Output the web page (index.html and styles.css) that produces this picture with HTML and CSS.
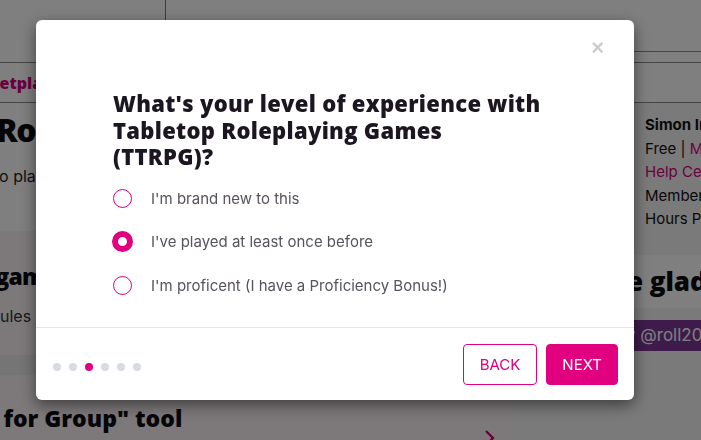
FILE: index.html
```html
<!DOCTYPE html>
<html lang="en">
<head>
<meta charset="utf-8">
<title>Roll20 – Onboarding</title>
<link rel="stylesheet" href="styles.css">
</head>
<body>
<div class="page">
  <header class="topbar">
    <div class="brand"></div>
    <div class="topbar-rest"></div>
  </header>
  <nav class="nav">
    <a class="nav-link">Marketplace</a>
  </nav>
  <div class="main">
    <section class="content">
      <div class="hero">
        <h1 class="hero-title">Roll20</h1>
        <p class="hero-text">to play</p>
      </div>
      <div class="card card-games">
        <h2 class="card-title games-title">Board games</h2>
        <p class="card-text">rules can vary</p>
      </div>
      <div class="card card-lfg">
        <h2 class="card-title lfg-title">Use the "Looking for Group" tool</h2>
        <svg class="chevron" width="12" height="16" viewBox="0 0 12 16"><path d="M2 1 L9 8 L2 15" fill="none" stroke="#c4006f" stroke-width="2.2"/></svg>
      </div>
    </section>
    <aside class="sidebar">
      <div class="profile">
        <div class="avatar"></div>
        <div class="profile-info">
          <div class="profile-name">Simon Ingram</div>
          <div>Free | <span class="pink">My Account</span></div>
          <div class="pink">Help Center</div>
          <div>Member Since</div>
          <div>Hours Played</div>
        </div>
      </div>
      <div class="glad">We're glad you're here</div>
      <div class="follow">Follow @roll20</div>
    </aside>
  </div>
</div>

<div class="backdrop">
  <div class="modal">
    <div class="modal-header">
      <button class="close" type="button">&times;</button>
    </div>
    <div class="modal-body">
      <h3 class="question">What's your level of experience with Tabletop Roleplaying Games (TTRPG)?</h3>
      <ul class="options">
        <li class="option"><span class="radio"></span><span class="option-label">I'm brand new to this</span></li>
        <li class="option"><span class="radio radio-checked"></span><span class="option-label">I've played at least once before</span></li>
        <li class="option"><span class="radio"></span><span class="option-label">I'm proficent (I have a Proficiency Bonus!)</span></li>
      </ul>
    </div>
    <div class="modal-footer">
      <div class="dots">
        <span class="dot"></span><span class="dot"></span><span class="dot dot-active"></span><span class="dot"></span><span class="dot"></span><span class="dot"></span>
      </div>
      <div class="actions">
        <button class="btn btn-outline" type="button">BACK</button>
        <button class="btn btn-primary" type="button">NEXT</button>
      </div>
    </div>
  </div>
</div>
</body>
</html>
```

FILE: styles.css
```css
* { box-sizing: border-box; margin: 0; padding: 0; }
html, body { width: 701px; height: 440px; overflow: hidden; }
body {
  font-family: "Open Sans", "Noto Sans", sans-serif;
  background: #fff;
  color: #111;
  position: relative;
}

/* ---------- background page ---------- */
.topbar { height: 63px; display: flex; border-bottom: 1px solid #8a8a8a; }
.brand { width: 166px; border-right: 1px solid #777; }
.topbar-rest { flex: 1; height: 52px; border-bottom: 1px solid #8a8a8a; }
.nav { height: 40px; border-bottom: 1px solid #8a8a8a; display: flex; align-items: center; }
.nav-link { margin-left: -44px; font-weight: 800; font-size: 16px; color: #d4007e; }

.main { display: flex; }
.content { width: 514px; flex: none; overflow: hidden; background: #ebebeb; }
.hero { background: #fff; padding: 6px 0 43px 0; }
.hero-title { margin-left: -4px; font-size: 32px; line-height: 42px; font-weight: 800; color: #0c0a10; letter-spacing: -1.5px; }
.hero-text { margin-top: 13px; margin-left: -6px; font-family: "Inter", sans-serif; font-size: 16px; line-height: 24px; color: #222; }

.card { background: #faf2f7; position: relative; }
.card-games { height: 124px; padding-top: 30px; margin-bottom: 20px; }
.card-title { font-size: 24px; line-height: 30px; font-weight: 800; color: #0c0a10; white-space: nowrap; }
.games-title { margin-left: -76px; font-size: 23px; letter-spacing: -0.8px; }
.card-text { margin-top: 13px; margin-left: -6px; font-family: "Inter", sans-serif; font-size: 16px; line-height: 24px; color: #333; white-space: nowrap; }
.card-lfg { height: 80px; padding-top: 28px; }
.lfg-title { font-size: 23px; margin-left: -205px; }
.chevron { position: absolute; left: 484px; top: 55px; }

.sidebar { flex: 1; background: #f4f4f4; overflow: hidden; }
.profile { display: flex; padding: 10px 0 0 16px; height: 152px; }
.avatar { width: 100px; height: 100px; flex: none; }
.profile-info { padding-left: 15px; font-family: "Inter", sans-serif; font-size: 15px; line-height: 23.5px; color: #111; white-space: nowrap; }
.profile-name { font-weight: 700; }
.pink { color: #d4007e; }
.glad { background: #fff; height: 53px; padding-left: 50px; font-size: 26px; line-height: 53px; font-weight: 800; color: #0c0a10; white-space: nowrap; margin-bottom: 12px; }
.follow { background: #7c3797; height: 31px; padding-left: 70px; font-family: "Inter", sans-serif; font-size: 17px; line-height: 31px; color: #fff; white-space: nowrap; }

/* ---------- modal ---------- */
.backdrop {
  position: fixed;
  inset: 0;
  background: rgba(0, 0, 0, 0.5);
  padding: 20px 0 0 36px;
}
.modal {
  width: 598px;
  height: 380px;
  background: #fff;
  border-radius: 6px;
  box-shadow: 0 5px 15px rgba(0, 0, 0, 0.5);
  display: flex;
  flex-direction: column;
}
.modal-header { height: 40px; display: flex; justify-content: flex-end; padding: 16px 30px 0 0; }
.close {
  background: none; border: 0;
  font-family: "Liberation Sans", sans-serif;
  font-size: 22px; line-height: 16px; font-weight: 700;
  color: #000; opacity: 0.2;
}
.modal-body { flex: 1; padding: 30px 40px 0 77px; }
.question {
  max-width: 430px;
  font-family: "Open Sans", sans-serif;
  font-weight: 800;
  font-size: 22px;
  letter-spacing: 0.3px;
  line-height: 26.5px;
  color: #1b1620;
  margin-bottom: 7px;
}
.options { list-style: none; }
.option { height: 43.5px; display: flex; align-items: center; }
.radio {
  width: 19px; height: 19px; flex: none;
  border: 1.5px solid #e1007f;
  border-radius: 50%;
}
.radio-checked { width: 21px; height: 21px; margin-left: -1px; margin-right: -1px; border: 6px solid #e1007f; }
.option-label {
  margin-left: 19px;
  font-family: "Inter", sans-serif;
  font-size: 15px;
  color: #58525d;
}

.modal-footer {
  height: 73px;
  border-top: 1px solid #e5e5e5;
  display: flex;
  align-items: center;
  justify-content: space-between;
  padding: 0 16px 0 17px;
}
.dots { display: flex; gap: 8px; margin-top: 5px; }
.dot { width: 8px; height: 8px; border-radius: 50%; background: #d7dce3; }
.dot-active { background: #e1007f; }
.actions { display: flex; gap: 9px; }
.btn {
  height: 41px;
  padding: 0 16px;
  border-radius: 4px;
  font-family: "Inter", sans-serif;
  font-size: 15px;
  border: 1px solid #e1007f;
}
.btn-outline { background: #fff; color: #e1007f; }
.btn-primary { background: #e1007f; color: #fff; padding: 0 15px; }
```
